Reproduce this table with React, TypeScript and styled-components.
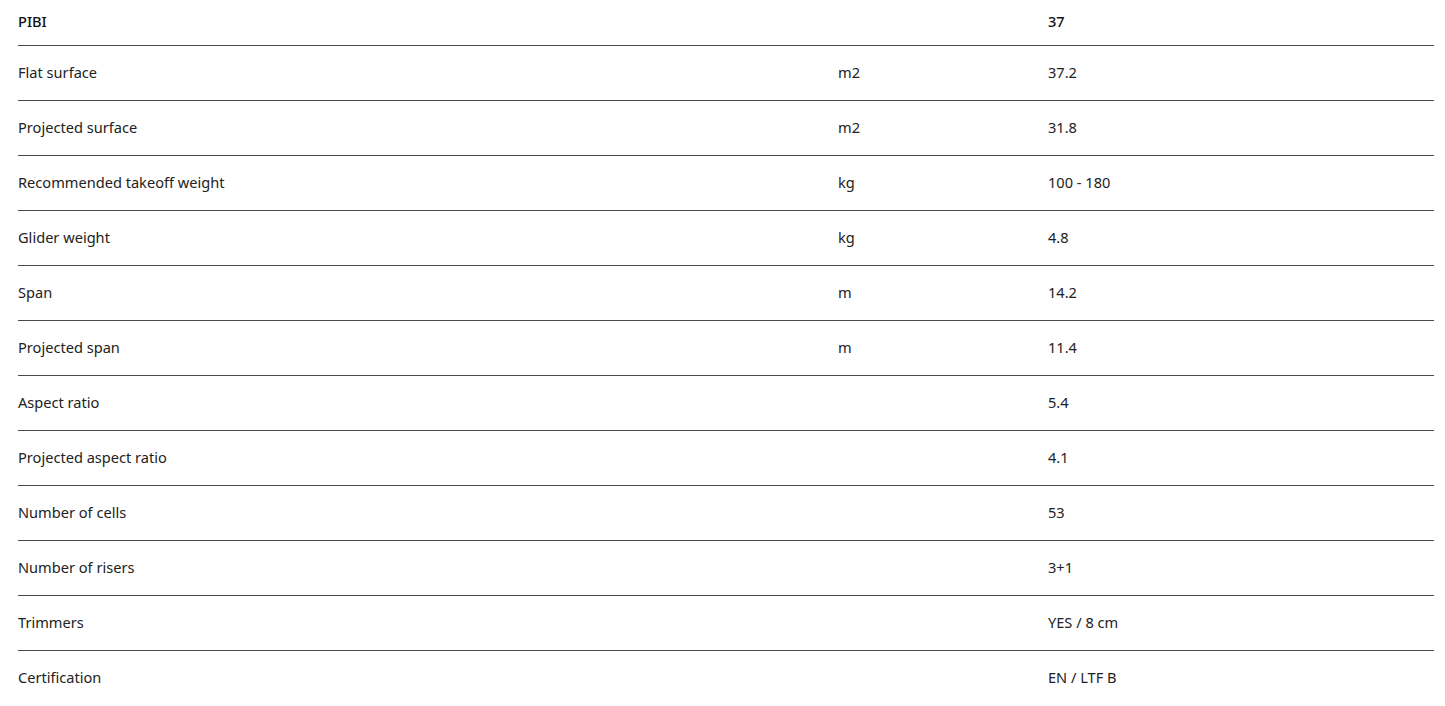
import React from 'react'
import { styled, createGlobalStyle } from 'styled-components'

const GlobalStyle = createGlobalStyle`
  html, body {
    margin: 0;
    padding: 0;
    background: #ffffff;
  }
  body {
    font-family: "Noto Sans", "Open Sans", sans-serif;
    color: #222222;
  }
`

interface Spec {
    label: string
    unit?: string
    value: string
}

const specs: Spec[] = [
    { label: 'Flat surface', unit: 'm2', value: '37.2' },
    { label: 'Projected surface', unit: 'm2', value: '31.8' },
    { label: 'Recommended takeoff weight', unit: 'kg', value: '100 - 180' },
    { label: 'Glider weight', unit: 'kg', value: '4.8' },
    { label: 'Span', unit: 'm', value: '14.2' },
    { label: 'Projected span', unit: 'm', value: '11.4' },
    { label: 'Aspect ratio', value: '5.4' },
    { label: 'Projected aspect ratio', value: '4.1' },
    { label: 'Number of cells', value: '53' },
    { label: 'Number of risers', value: '3+1' },
    { label: 'Trimmers', value: 'YES / 8 cm' },
    { label: 'Certification', value: 'EN / LTF B' },
]

const App = () => {
    return (
        <Page>
            <GlobalStyle />
            <Table>
                <HeadRow>
                    <Cell>PIBI</Cell>
                    <Cell />
                    <Cell>37</Cell>
                </HeadRow>
                {specs.map((s, i) => (
                    <Row key={s.label} $last={i === specs.length - 1}>
                        <Cell>{s.label}</Cell>
                        <Cell>{s.unit}</Cell>
                        <Cell>{s.value}</Cell>
                    </Row>
                ))}
            </Table>
        </Page>
    )
}

export default App

const Page = styled.div`
padding: 0 11px 0 18px;
`

const Table = styled.div`
display: flex;
flex-direction: column;
width: 100%;
`

const Row = styled.div<{ $last?: boolean }>`
display: grid;
grid-template-columns: 820px 210px 1fr;
align-items: center;
box-sizing: border-box;
height: 55px;
padding-bottom: 3px;
border-bottom: ${p => (p.$last ? 'none' : '1px solid #4a4a4a')};
font-size: 14.6px;
`

const HeadRow = styled(Row)`
height: 46px;
font-weight: 500;
color: #111111;
`

const Cell = styled.div`
white-space: nowrap;
`
